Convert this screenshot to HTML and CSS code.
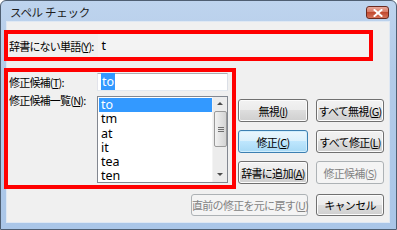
FILE: index.html
```html
<!DOCTYPE html>
<html lang="ja">
<head>
    <meta charset="UTF-8">
    <title>スペル チェック</title>
    <link rel="stylesheet" href="styles.css">
</head>
<body>
    <div class="window">
        <div class="titlebar">
            <span class="title">スペル チェック</span>
            <span class="close">
                <svg width="10" height="8" viewBox="0 0 10 8">
                    <path d="M1.5 1 L8.5 7 M8.5 1 L1.5 7" stroke="#fff" stroke-width="2" stroke-linecap="square"/>
                </svg>
            </span>
        </div>

        <div class="client">
            <!-- word not in dictionary -->
            <div class="mark notword">
                <span class="label">辞書にない単語(<u>Y</u>):</span>
                <span class="word">t</span>
            </div>

            <div class="main">
                <div class="mark suggest">
                    <label class="label">修正候補(<u>T</u>):</label>
                    <div class="textbox"><span class="sel">to</span></div>
                    <label class="label">修正候補一覧(<u>N</u>):</label>
                    <div class="listbox">
                        <ul class="items">
                            <li class="selected">to</li>
                            <li>tm</li>
                            <li>at</li>
                            <li>it</li>
                            <li>tea</li>
                            <li>ten</li>
                        </ul>
                        <div class="scrollbar">
                            <span class="arrow up"></span>
                            <span class="thumb"><i></i><i></i><i></i></span>
                            <span class="track"></span>
                            <span class="arrow down"></span>
                        </div>
                    </div>
                </div>

                <div class="actions">
                    <button class="btn">無視(<u>I</u>)</button>
                    <button class="btn">すべて無視(<u>G</u>)</button>
                    <button class="btn default">修正(<u>C</u>)</button>
                    <button class="btn">すべて修正(<u>L</u>)</button>
                    <button class="btn">辞書に追加(<u>A</u>)</button>
                    <button class="btn" disabled>修正候補(<u>S</u>)</button>
                </div>
            </div>

            <div class="footer">
                <button class="btn undo" disabled>直前の修正を元に戻す(<u>U</u>)</button>
                <button class="btn cancel">キャンセル</button>
            </div>
        </div>
    </div>
</body>
</html>
```

FILE: styles.css
```css
body {
    margin: 0;
    font-family: "Noto Sans CJK JP", "Noto Sans", sans-serif;
    font-size: 11px;
    color: #000;
}

.window {
    width: 397px;
    height: 230px;
    box-sizing: border-box;
    border: 1px solid #4f5f72;
    border-radius: 6px 6px 0 0;
    background: linear-gradient(#bed4ee, #b3cbe8 30%, #aac6e8);
    padding: 0 7px 7px 6px;
    display: flex;
    flex-direction: column;
}

.titlebar {
    height: 21px;
    display: flex;
    align-items: center;
    justify-content: space-between;
}

.title {
    padding-left: 3px;
    font-size: 11.5px;
    line-height: 14px;
    letter-spacing: -0.3px;
    color: #1e1e1e;
}

.close {
    width: 21px;
    height: 11px;
    margin-top: 2px;
    border: 1px solid #6b2a20;
    border-radius: 3px;
    background: linear-gradient(#e9a99c, #d7755f 50%, #c24a30 50%, #d6735a);
    display: flex;
    align-items: center;
    justify-content: center;
}

.client {
    flex: 1;
    background: #f0f0f0;
    box-shadow: 0 0 0 1px #dfe8f3;
    display: flex;
    flex-direction: column;
}

.mark {
    border: 4px solid #ff0000;
    box-sizing: border-box;
    margin-left: -3px;
}

.notword {
    margin-top: 8px;
    width: 369px;
    height: 31px;
    display: flex;
    align-items: center;
    padding-left: 1px;
}

.notword .word {
    flex: 1;
    margin-left: 4px;
    padding-left: 4px;
    align-self: stretch;
    line-height: 23px;
    font-family: "Noto Sans", sans-serif;
    font-size: 12.5px;
    background: #f3f3f3;
}

.label {
    line-height: 18px;
    letter-spacing: -0.8px;
    white-space: nowrap;
}

.main {
    margin-top: 7px;
    display: flex;
    align-items: flex-start;
}

.suggest {
    width: 232px;
    height: 121px;
    padding: 1px 0 0 1px;
    display: grid;
    grid-template-columns: 88px 131px;
    grid-template-rows: 18px 87px;
    row-gap: 5px;
}

.suggest .label:nth-of-type(2) {
    margin-top: -5px;
}

.textbox {
    box-sizing: border-box;
    border: 1px solid #abadb3;
    border-color: #abadb3 #dbdfe6 #e3e9ef #e2e3ea;
    background: #fff;
    padding: 1px 0 0 3px;
    line-height: 14px;
    font-family: "Noto Sans", sans-serif;
    font-size: 12.5px;
}

.sel {
    background: #3399ff;
    color: #fff;
    padding: 0 1px;
}

.listbox {
    box-sizing: border-box;
    border: 1px solid #828790;
    background: #fff;
    display: flex;
    overflow: hidden;
}

.items {
    list-style: none;
    margin: 0;
    padding: 1px 0 0 1px;
    flex: 1;
    font-family: "Noto Sans", sans-serif;
    font-size: 12.5px;
}

.items li {
    height: 14.3px;
    line-height: 14.3px;
    padding-left: 2px;
}

.items li.selected {
    background: #3399ff;
    color: #fff;
}

.scrollbar {
    width: 14px;
    background: #ececec;
    display: flex;
    flex-direction: column;
    border-left: 1px solid #f4f4f4;
}

.arrow {
    height: 14px;
    position: relative;
}

.arrow::after {
    content: "";
    position: absolute;
    left: 4px;
    top: 5px;
    border-left: 3px solid transparent;
    border-right: 3px solid transparent;
}

.arrow.up::after {
    border-bottom: 3px solid #4d4d4d;
}

.arrow.down::after {
    border-top: 3px solid #4d4d4d;
}

.thumb {
    height: 34px;
    margin: 0 0 0 1px;
    border: 1px solid #9a9a9a;
    border-radius: 2px;
    background: linear-gradient(90deg, #f2f2f2, #e2e2e2 50%, #d4d4d4);
    display: flex;
    flex-direction: column;
    align-items: center;
    justify-content: center;
    gap: 1px;
}

.thumb i {
    width: 6px;
    height: 1px;
    background: #6f6f6f;
}

.track {
    flex: 1;
}

.actions {
    margin: 31px 0 0 2px;
    display: grid;
    grid-template-columns: 70px 68px;
    grid-auto-rows: 23px;
    column-gap: 8px;
    row-gap: 8px;
}

.btn {
    font-family: "Noto Sans CJK JP", "Noto Sans", sans-serif;
    font-size: 11px;
    line-height: 14px;
    letter-spacing: -0.7px;
    color: #000;
    padding: 0;
    border: 1px solid #707070;
    border-radius: 3px;
    background: linear-gradient(#f2f2f2, #ebebeb 50%, #dddddd 50%, #cfcfcf);
    box-shadow: inset 0 0 0 1px #fcfcfc;
    white-space: nowrap;
}

.btn.default {
    border-color: #3c7fb1;
    background: linear-gradient(#eaf6fd, #d9f0fc 50%, #bee6fd 50%, #a7d9f5);
    box-shadow: inset 0 0 0 1px #d0eefd;
}

.btn:disabled {
    border-color: #adb2b5;
    background: #f4f4f4;
    box-shadow: none;
    color: #838383;
}

.footer {
    margin-top: 5px;
    padding-right: 5px;
    display: flex;
    justify-content: flex-end;
    gap: 8px;
}

.footer .btn {
    height: 22px;
}

.undo {
    width: 117px;
}

.cancel {
    width: 68px;
}
```
